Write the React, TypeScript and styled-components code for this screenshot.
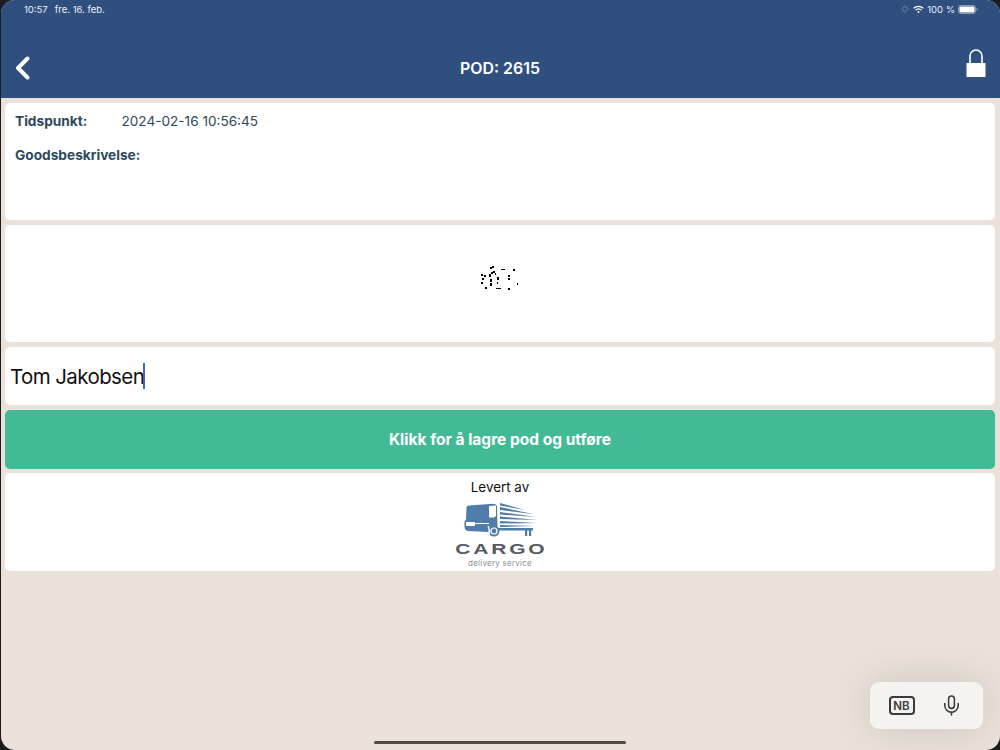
import React from 'react';
import styled, { createGlobalStyle } from 'styled-components';
import { Mic } from 'lucide-react';

const GlobalStyle = createGlobalStyle`
    html, body {
        margin: 0;
        padding: 0;
        background: #1c1c1e;
    }
    body {
        font-family: Inter, "Liberation Sans", sans-serif;
    }
`;

const Screen = styled.div`
    position: relative;
    box-sizing: border-box;
    width: 999px;
    height: 750px;
    margin-left: 1px;
    overflow: hidden;
    display: flex;
    flex-direction: column;
    background: #e9e1da;
    border-radius: 14px;
`;

const Header = styled.header`
    height: 98px;
    flex-shrink: 0;
    background: #2f4f7f;
    color: #fff;
    display: flex;
    flex-direction: column;
`;

const StatusBar = styled.div`
    height: 18px;
    padding: 0 22px 0 23px;
    display: flex;
    align-items: center;
    justify-content: space-between;
    font-size: 9.5px;
    color: #eef1f6;
`;

const StatusGroup = styled.div`
    display: flex;
    align-items: center;
    gap: 7px;
`;

const StatusRight = styled(StatusGroup)`
    gap: 3px;
`;

const NavBar = styled.div`
    flex: 1;
    padding: 20px 14px 0 13px;
    display: grid;
    grid-template-columns: 1fr auto 1fr;
    align-items: center;
`;

const LockSlot = styled.div`
    display: flex;
    justify-content: flex-end;
    padding-bottom: 10px;
`;

const Title = styled.h1`
    margin: 0;
    font-size: 15.9px;
    font-weight: 600;
`;

const Content = styled.main`
    padding: 5px 5px 0 4px;
    display: flex;
    flex-direction: column;
    gap: 5px;
`;

const Card = styled.section<{ $height: number }>`
    box-sizing: border-box;
    height: ${(p) => p.$height}px;
    background: #fff;
    border-radius: 5px;
`;

const InfoCard = styled(Card)`
    padding: 10px 10px;
    color: #2d4a5c;
    font-size: 13.7px;
    line-height: 17px;
    display: flex;
    flex-direction: column;
    gap: 17px;
`;

const InfoRow = styled.div`
    display: flex;
`;

const InfoLabel = styled.span`
    width: 106.5px;
    font-weight: 700;
    white-space: nowrap;
`;

const InfoValue = styled.span`
    font-size: 13.6px;
`;

const SignatureCard = styled(Card)`
    display: flex;
    align-items: center;
    justify-content: center;
`;

const NameCard = styled(Card)`
    padding: 0 5px;
    display: flex;
    align-items: center;
    font-size: 20.5px;
    letter-spacing: -0.6px;
    color: #111;
`;

const Caret = styled.span`
    width: 2px;
    height: 26px;
    margin-left: -1px;
    background: #4262dc;
`;

const SaveButton = styled.button`
    height: 59px;
    border: 0;
    border-radius: 5px;
    background: #42ba96;
    color: #fff;
    font-family: inherit;
    font-size: 15.5px;
    font-weight: 700;
    margin-bottom: -1px;
`;

const BrandCard = styled(Card)`
    display: flex;
    flex-direction: column;
    align-items: center;
    padding-top: 6px;
    color: #111;
    font-size: 13.4px;
    line-height: 17px;
`;

const Wordmark = styled.div`
    margin-top: 4px;
    padding-left: 2px;
    color: #565b63;
    font-family: "Liberation Sans", sans-serif;
    font-size: 15px;
    line-height: 13px;
    font-weight: 700;
    letter-spacing: 2px;
    transform: scaleX(1.4);
`;

const Tagline = styled.div`
    margin-top: 3px;
    color: #8a8f96;
    font-size: 8px;
    line-height: 11px;
    letter-spacing: 0.25px;
`;

const Dictation = styled.div`
    position: absolute;
    left: 869px;
    top: 682px;
    box-sizing: border-box;
    width: 113px;
    height: 47px;
    padding-right: 2px;
    border-radius: 9px;
    background: #f5f3f0;
    box-shadow: 0 0 40px rgba(0, 0, 0, 0.13);
    display: flex;
    align-items: center;
    justify-content: center;
    gap: 25px;
    color: #3a3a3c;
`;

const LangBadge = styled.div`
    box-sizing: border-box;
    width: 26px;
    height: 19px;
    border: 2px solid #3a3a3c;
    border-radius: 4px;
    display: flex;
    align-items: center;
    justify-content: center;
    font-size: 11.5px;
    font-weight: 600;
`;

const HomeBar = styled.div`
    position: absolute;
    left: 373px;
    top: 741px;
    width: 252px;
    height: 3px;
    border-radius: 2px;
    background: #4a4a4a;
`;

const signatureDots = [
    [30, 12, 2, 2], [32, 11, 2, 2], [21, 19, 2, 2], [24, 20, 2, 2], [22, 23, 2, 2], [29, 19, 2, 3],
    [31, 17, 2, 2], [33, 16, 2, 2], [35, 18, 1, 2], [21, 27, 2, 2], [25, 32, 2, 2], [30, 24, 2, 3],
    [30, 28, 2, 3], [37, 22, 2, 3], [37, 27, 1, 2], [36, 33, 5, 1], [41, 14, 4, 1], [53, 14, 2, 2],
    [48, 20, 2, 2], [48, 23, 2, 2], [48, 33, 2, 2], [57, 28, 1, 2],
];

const Signature: React.FC = () => (
    <svg width="80" height="45" viewBox="0 0 80 45" fill="#000" shapeRendering="crispEdges" style={{ marginBottom: 12 }}>
        {signatureDots.map(([x, y, w, h], i) => (
            <rect key={i} x={x} y={y} width={w} height={h} />
        ))}
    </svg>
);

const TruckLogo: React.FC = () => (
    <svg width="74" height="36" viewBox="0 0 74 36" style={{ marginTop: 6 }}>
        <g fill="#4f7ca8">
            <path d="M3.500 5 Q3.800 3.500 6 3.400 L30 1.800 Q33 1.800 34 4 L34.500 27 L26 27 L25 30 L5 29 Q1.500 28 1.500 25 L1.500 19 L3 18 Z" />
            <circle cx="31" cy="29" r="5.500" />
            <rect x="34" y="26" width="36" height="2.500" />
            <rect x="62" y="28" width="2.200" height="6" />
            <rect x="66" y="28" width="2.200" height="6" />
            <path d="M37 1 L62 8 L37 3.500 Z" />
            <path d="M37 5 L70 12 L37 8 Z" />
            <path d="M37 10 L73 15 L37 12.500 Z" />
            <path d="M37 14.500 L74 18 L37 17 Z" />
            <path d="M37 19 L74 21 L37 21.500 Z" />
            <path d="M37 23 L72 24 L37 25 Z" />
        </g>
        <path fill="#fff" d="M26 4 L33 3.500 L33 14 L31 15.500 L26 15.500 Z" />
        <rect x="3" y="20" width="9" height="4" fill="#fff" />
        <rect x="12" y="21" width="14" height="1" fill="#fff" />
        <path d="M25 24 Q27.500 29 25.500 34" stroke="#fff" strokeWidth="1.400" fill="none" />
        <circle cx="31" cy="29" r="3" fill="none" stroke="#fff" strokeWidth="1.200" />
    </svg>
);

const App: React.FC = () => (
    <>
        <GlobalStyle />
        <Screen>
            <Header>
                <StatusBar>
                    <StatusGroup>
                        <span>10:57</span>
                        <span>fre. 16. feb.</span>
                    </StatusGroup>
                    <StatusRight>
                        <svg width="8" height="8" viewBox="0 0 8 8" stroke="#7f93b0" strokeWidth="0.8" style={{ marginRight: 1 }}>
                            <path d="M4 0.500V2.500M4 5.500V7.500M0.500 4H2.500M5.500 4H7.500M1.500 1.500L3 3M5 5L6.500 6.500M1.500 6.500L3 5M5 3L6.500 1.500" />
                        </svg>
                        <svg width="11" height="9" viewBox="0 0 12 9" fill="none" stroke="#fff" strokeWidth="1.400">
                            <path d="M0.800 3.200C3.800 0.300 8.200 0.300 11.200 3.200" />
                            <path d="M2.800 5.200C4.700 3.500 7.300 3.500 9.200 5.200" />
                            <path d="M6 8.500L4.600 7C5.400 6.300 6.600 6.300 7.400 7Z" fill="#fff" stroke="none" />
                        </svg>
                        <span>100 %</span>
                        <svg width="20" height="9" viewBox="0 0 20 9">
                            <rect x="0.500" y="0.500" width="17" height="8" rx="2" fill="none" stroke="#8a9cb6" />
                            <rect x="1.500" y="1.500" width="15" height="6" rx="1" fill="#fff" />
                            <rect x="18.500" y="3" width="1" height="3" rx="0.500" fill="#8a9cb6" />
                        </svg>
                    </StatusRight>
                </StatusBar>
                <NavBar>
                    <svg width="18" height="26" viewBox="0 0 18 26" fill="none" stroke="#fff" strokeWidth="4" strokeLinecap="round" strokeLinejoin="round">
                        <path d="M13.500 3.500L4 13L13.500 22.500" />
                    </svg>
                    <Title>POD: 2615</Title>
                    <LockSlot>
                        <svg width="20" height="28" viewBox="0 0 20 28">
                            <path d="M4 14V7a6 6 0 0 1 12 0V14" fill="none" stroke="#fff" strokeWidth="1.600" />
                            <rect x="0.500" y="14" width="19" height="14" fill="#fff" />
                        </svg>
                    </LockSlot>
                </NavBar>
            </Header>
            <Content>
                <InfoCard $height={117}>
                    <InfoRow>
                        <InfoLabel>Tidspunkt:</InfoLabel>
                        <InfoValue>2024-02-16 10:56:45</InfoValue>
                    </InfoRow>
                    <InfoRow>
                        <InfoLabel>Goodsbeskrivelse:</InfoLabel>
                    </InfoRow>
                </InfoCard>
                <SignatureCard $height={117}>
                    <Signature />
                </SignatureCard>
                <NameCard $height={58}>
                    Tom Jakobsen
                    <Caret />
                </NameCard>
                <SaveButton>Klikk for å lagre pod og utføre</SaveButton>
                <BrandCard $height={98}>
                    Levert av
                    <TruckLogo />
                    <Wordmark>CARGO</Wordmark>
                    <Tagline>delivery service</Tagline>
                </BrandCard>
            </Content>
            <Dictation>
                <LangBadge>NB</LangBadge>
                <Mic size={23} strokeWidth={1.6} />
            </Dictation>
            <HomeBar />
        </Screen>
    </>
);

export default App;
